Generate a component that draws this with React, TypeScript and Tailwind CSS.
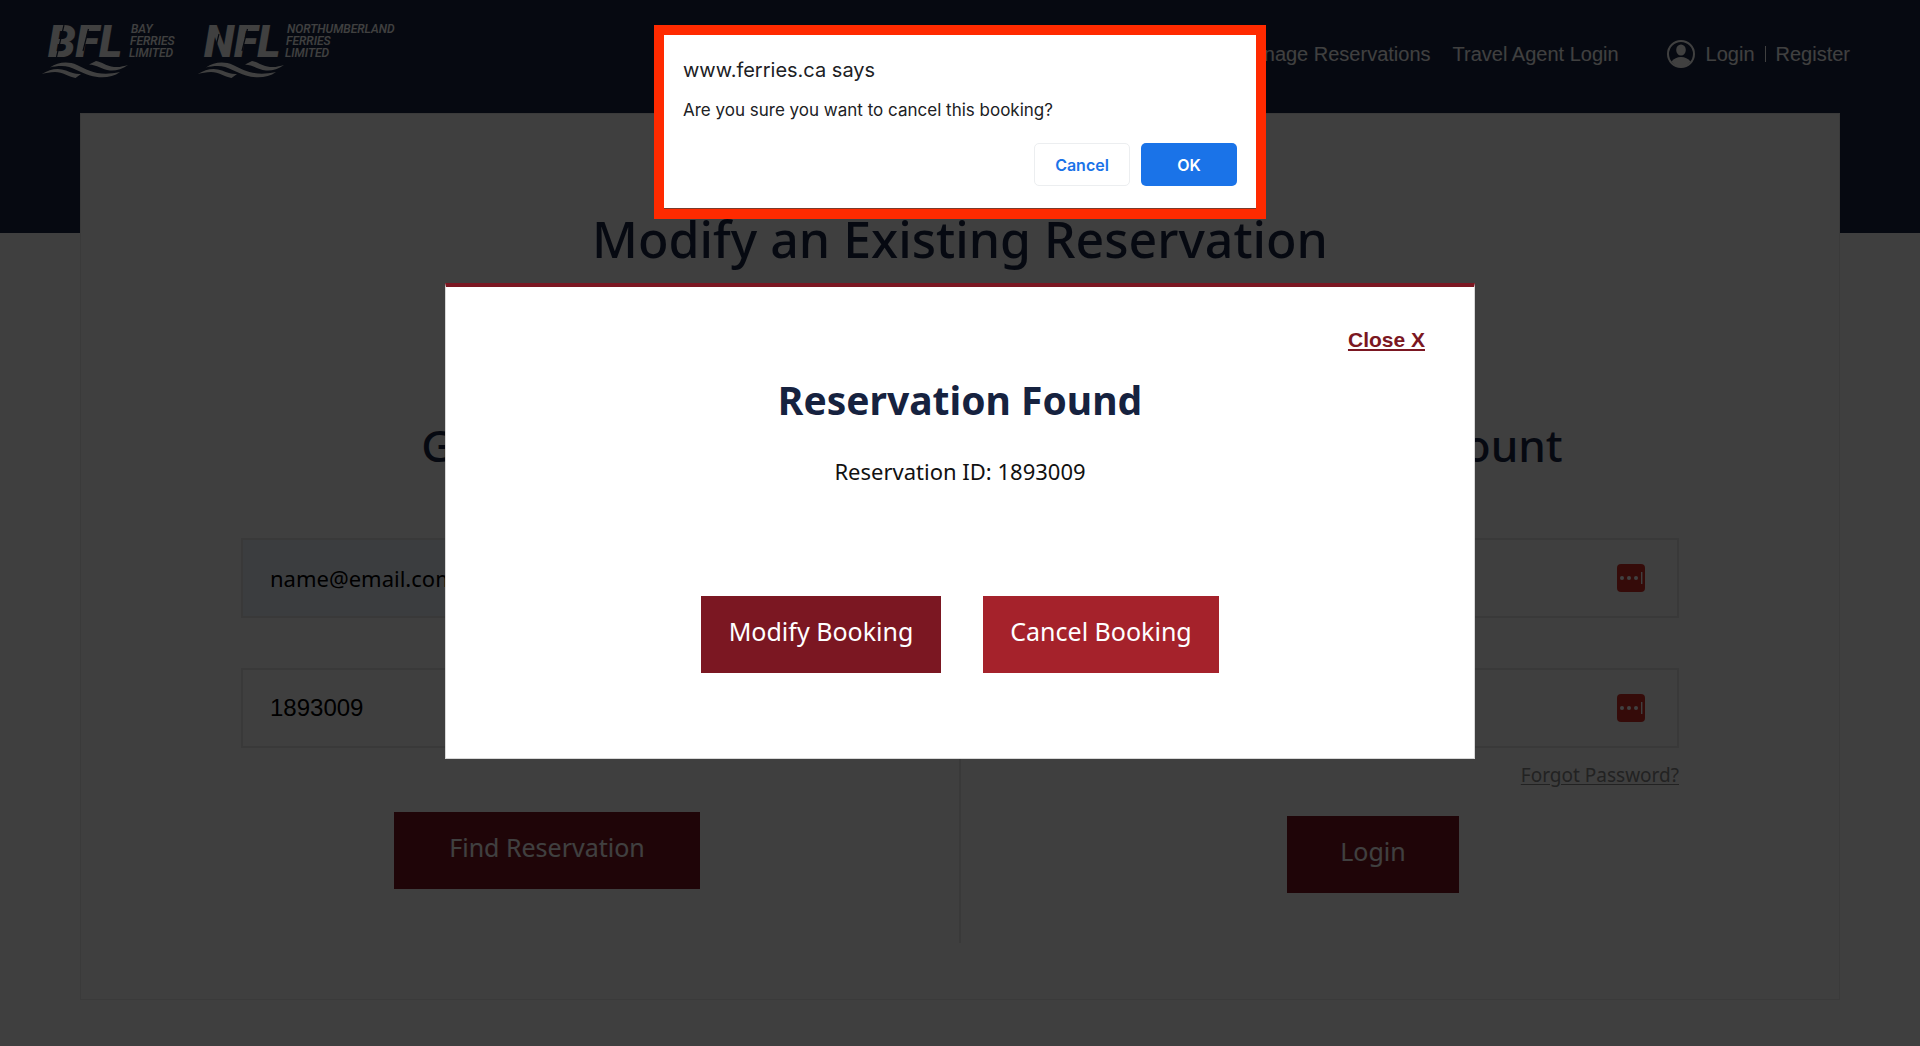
import { useState } from "react";

function Waves() {
  return (
    <g fill="#fff">
      <path d="M1.7 54C10 49 18 47.5 26 50.5C32 53 36 54.5 41 54L35.5 58C28 56.5 23 52 15 52C10 52 6 53 1.7 54Z" />
      <path d="M10 47.5C18 42 28 41 37 45C48 50 58 57 80 52C72 58 60 58.5 50 55.5C40 52.5 32 46 22 46C17 46 13 46.5 10 47.5Z" />
      <path d="M49 44.5L56 41C62 42 66 46 74 47C80 47.5 84 46 88 45C82 49 76 51 70 50.5C62 49.5 57 45 49 44.5Z" />
    </g>
  );
}

function Logo({ mark, lines, width, slits }: { mark: string; lines: string[]; width: number; slits: string }) {
  return (
    <a href="#" aria-label={lines.join(" ")}>
      <svg width={width} height="60" viewBox={`0 0 ${width} 60`} fill="#fff" className="overflow-visible font-['Roboto',sans-serif] italic">
        <text x="8" y="37" fontSize="44" fontWeight="900">{mark}</text>
        <path d={slits} stroke="#1a2744" strokeWidth="1.2" />
        {lines.map((line, i) => (
          <text key={line} x={91 - i} y={13 + i * 12} fontSize="12" fontWeight="500">{line}</text>
        ))}
        <Waves />
      </svg>
    </a>
  );
}

function UserIcon() {
  return (
    <svg width="28" height="28" viewBox="0 0 28 28" fill="none">
      <circle cx="14" cy="14" r="13" stroke="#fff" strokeWidth="2" />
      <ellipse cx="14" cy="10" rx="4.8" ry="5.6" fill="#fff" />
      <path d="M4.5 21.5C7 18.5 10 17 14 17C18 17 21 18.5 23.5 21.5C21 25 18 27 14 27C10 27 7 25 4.5 21.5Z" fill="#fff" />
    </svg>
  );
}

function KeyIcon() {
  return (
    <svg width="28" height="28" viewBox="0 0 28 28" className="absolute top-[26px] right-[34px]">
      <rect width="28" height="28" rx="4" fill="#d32d27" />
      <g fill="#fff">
        <circle cx="5" cy="14" r="2" />
        <circle cx="12" cy="14" r="2" />
        <circle cx="19" cy="14" r="2" />
        <rect x="24" y="8" width="1.4" height="12" />
      </g>
    </svg>
  );
}

const inputClass = "h-20 w-full border-2 border-[#e4e4e4] px-[27px] text-black outline-none";
const buttonClass = "h-[77px] bg-[#7b1722] pb-1.5 text-[25px] text-white";

export default function App() {
  const [email, setEmail] = useState("name@email.com");
  const [reservationId, setReservationId] = useState("1893009");
  const [username, setUsername] = useState("");
  const [password, setPassword] = useState("");
  const [found, setFound] = useState(true);
  const [confirming, setConfirming] = useState(true);

  return (
    <div className="min-h-screen bg-[#fcfcfc] font-['Noto_Sans',sans-serif]">
      <header className="flex h-[233px] items-start justify-between bg-[#1a2744] pt-5 pr-[70px] pl-10 text-white">
        <div className="flex gap-4">
          <Logo mark="BFL" lines={["BAY", "FERRIES", "LIMITED"]} width={140} slits="M16.5 37L24 5M43 31L48.5 9" />
          <Logo mark="NFL" lines={["NORTHUMBERLAND", "FERRIES", "LIMITED"]} width={200} slits="M18.5 32L23 14M46 31L51.5 9" />
        </div>
        <nav className="flex items-center pt-5 font-['Liberation_Sans',sans-serif] text-xl">
          <a href="#" className="mr-[22px]">Manage Reservations</a>
          <a href="#" className="mr-12">Travel Agent Login</a>
          <UserIcon />
          <a href="#" className="ml-[11px]">Login</a>
          <span className="mx-[10px] h-4 w-px bg-white" />
          <a href="#">Register</a>
        </nav>
      </header>

      <main className="mx-20 -mt-[120px] border border-[#e6e6e6] bg-[#f9f9f9] pt-[95px] pb-14">
        <h1 className="text-center text-[50px] leading-[60px] font-medium text-[#1a2744]">Modify an Existing Reservation</h1>

        <div className="mt-[150px] flex">
          <form className="flex-1 border-r-2 border-[#e4e4e4] pr-[106px] pb-[54px] pl-[160px] text-center" onSubmit={(e) => e.preventDefault()}>
            <h2 className="text-[44px] leading-[52px] font-medium text-[#1a2744]">Guest Login</h2>
            <input aria-label="Email" value={email} onChange={(e) => setEmail(e.target.value)} className={`${inputClass} mt-[67px] bg-[#ebf1fc] text-[22px]`} />
            <input aria-label="Reservation ID" value={reservationId} onChange={(e) => setReservationId(e.target.value)} className={`${inputClass} mt-[50px] bg-[#fcfcfc] font-['Liberation_Sans',sans-serif] text-2xl`} />
            <button onClick={() => setFound(true)} className={`${buttonClass} mt-16 w-[306px]`}>Find Reservation</button>
          </form>

          <form className="flex-1 pr-[160px] pl-[106px] text-center" onSubmit={(e) => e.preventDefault()}>
            <h2 className="text-[44px] leading-[52px] font-medium text-[#1a2744]">Sign in to Account</h2>
            <div className="relative mt-[67px]">
              <input aria-label="Username" value={username} onChange={(e) => setUsername(e.target.value)} className={`${inputClass} bg-[#fcfcfc] text-[22px]`} />
              <KeyIcon />
            </div>
            <div className="relative mt-[50px]">
              <input aria-label="Password" type="password" value={password} onChange={(e) => setPassword(e.target.value)} className={`${inputClass} bg-[#fcfcfc] text-[22px]`} />
              <KeyIcon />
            </div>
            <div className="mt-[15px] text-right text-[19px] leading-6">
              <a href="#" className="text-[#888] underline underline-offset-2">Forgot Password?</a>
            </div>
            <button className={`${buttonClass} mt-[29px] w-[172px]`}>Login</button>
          </form>
        </div>
      </main>

      {found && (
        <div className="fixed inset-0 flex items-center justify-center bg-black/75 pb-1">
          <div role="dialog" aria-label="Reservation Found" className="w-[1030px] border border-t-4 border-[#d8d8d8] border-t-[#7b1722] bg-white pt-[39px] pb-[85px] text-center">
            <div className="pr-[49px] text-right font-['Liberation_Sans',sans-serif] text-[21px] leading-7">
              <button onClick={() => setFound(false)} className="font-bold text-[#7b1722] underline">Close X</button>
            </div>
            <h2 className="mt-[22px] text-[39px] leading-[48px] font-bold text-[#16223f]">Reservation Found</h2>
            <p className="mt-[31px] text-[22px] leading-8 text-[#111]">Reservation ID: {reservationId}</p>
            <div className="mt-[109px] flex justify-center gap-[42px]">
              <button className={`${buttonClass} w-60`}>Modify Booking</button>
              <button onClick={() => setConfirming(true)} className="h-[77px] w-[236px] bg-[#a5222b] pb-1.5 text-[25px] text-white">Cancel Booking</button>
            </div>
          </div>
        </div>
      )}

      {confirming && (
        <div className="fixed inset-x-0 top-[25px] flex justify-center font-['Inter',sans-serif]">
          <div role="alertdialog" aria-label="www.ferries.ca says" className="w-[612px] border-10 border-[#ff2a00] bg-white">
            <div className="border-b border-[#7a3a2a] px-[19px] pt-[21px] pb-[22px]">
              <p className="text-xl leading-7 text-[#202124]">www.ferries.ca says</p>
              <p className="mt-3.5 text-[17px] leading-6 text-[#202124]">Are you sure you want to cancel this booking?</p>
              <div className="mt-[21px] flex justify-end gap-[11px] text-base font-semibold">
                <button onClick={() => setConfirming(false)} className="h-[43px] w-24 rounded-[5px] border border-[#eceef0] text-[#1a73e8]">Cancel</button>
                <button onClick={() => setConfirming(false)} className="h-[43px] w-24 rounded-[5px] bg-[#1a73e8] text-white">OK</button>
              </div>
            </div>
          </div>
        </div>
      )}
    </div>
  );
}
